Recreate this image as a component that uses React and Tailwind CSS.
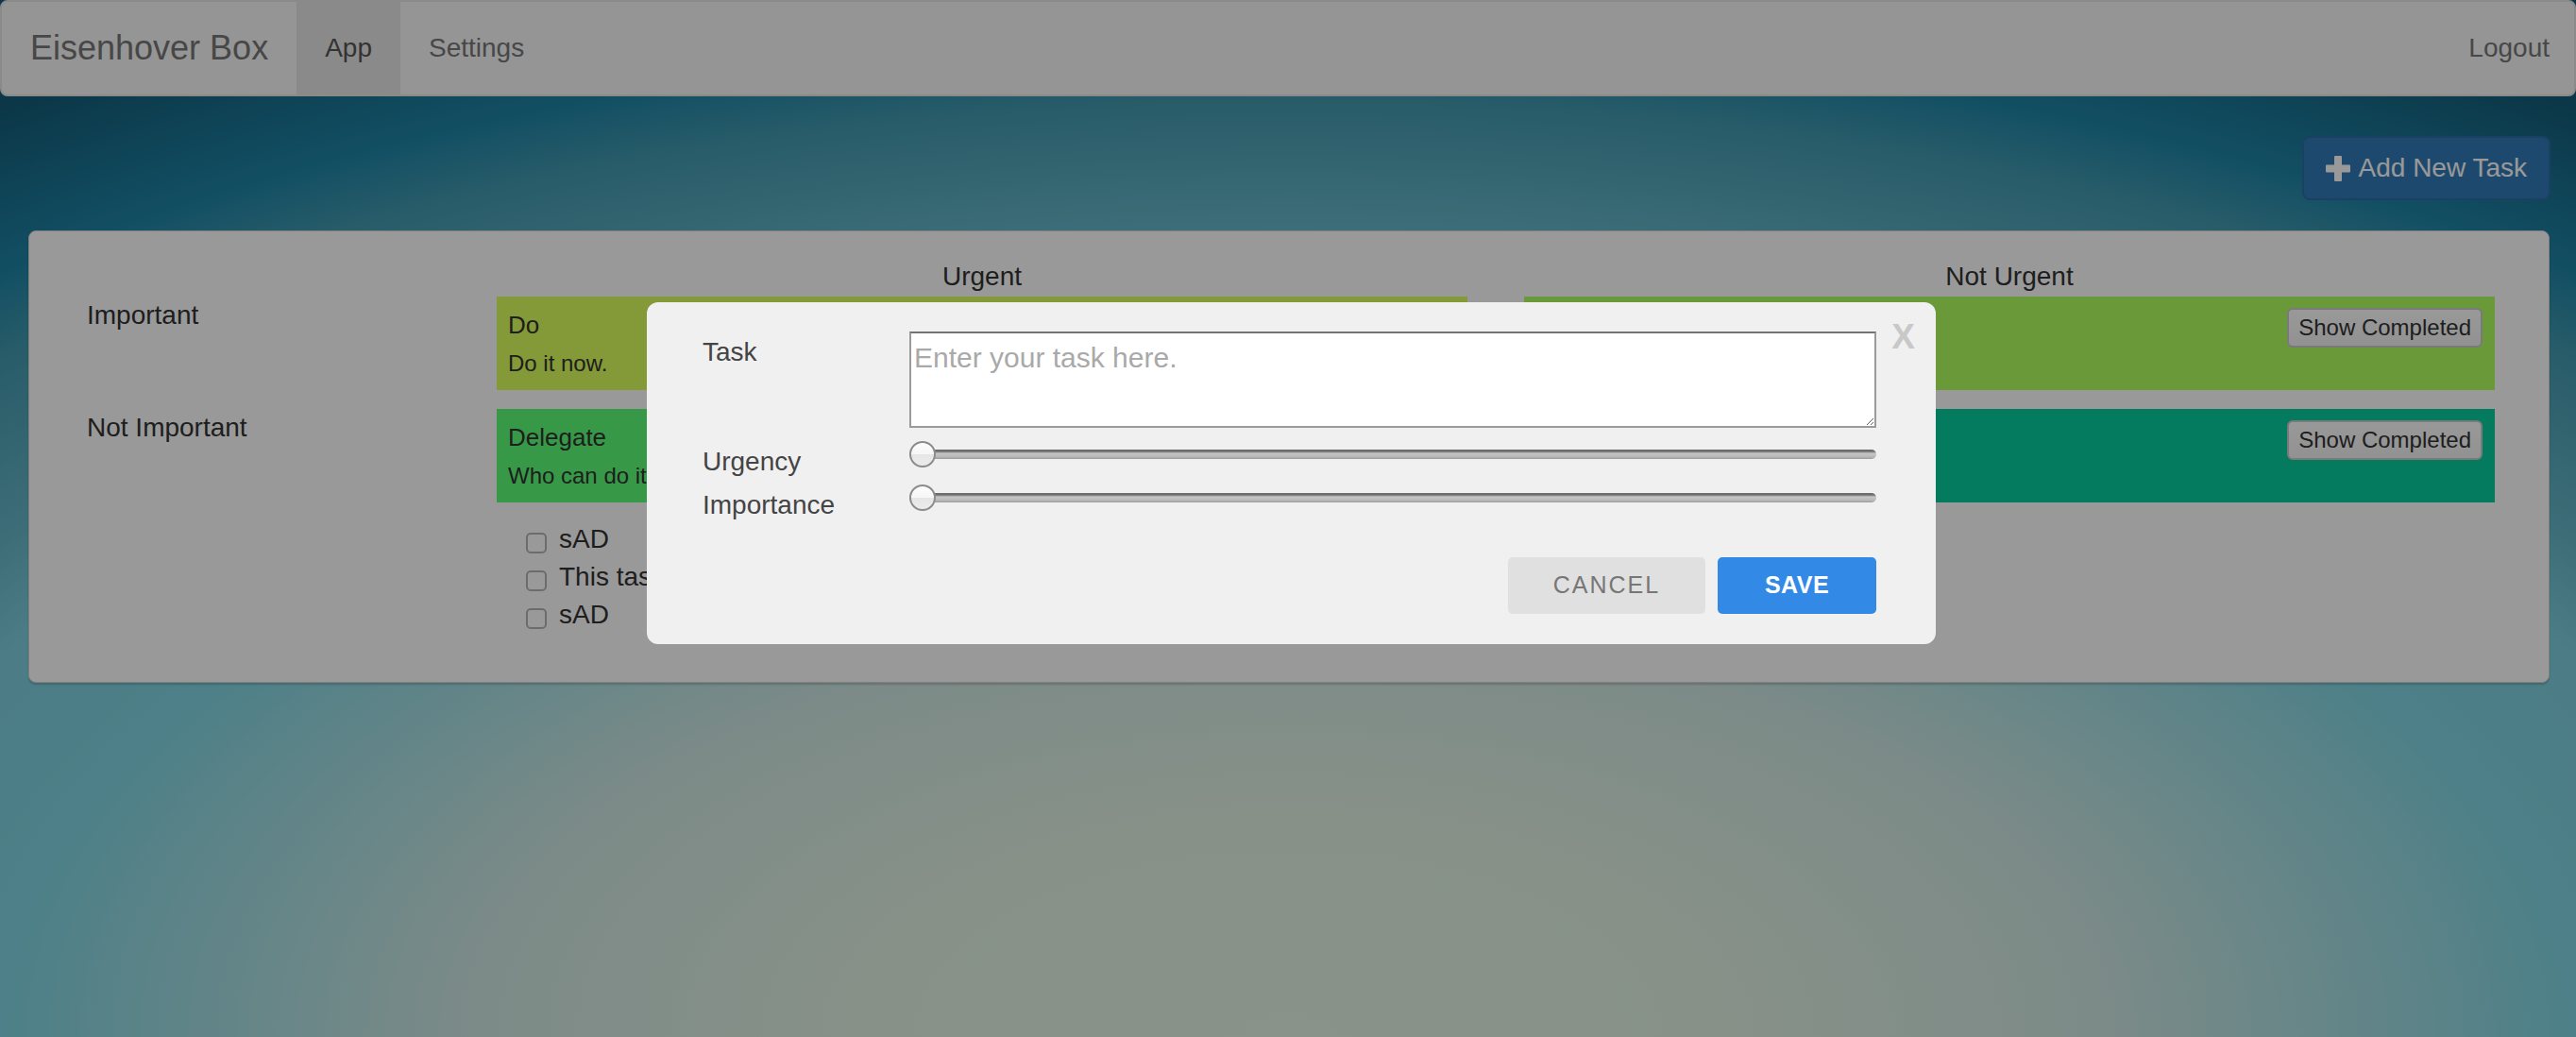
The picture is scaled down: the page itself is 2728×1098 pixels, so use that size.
import React from "react";
import * as Slider from "@radix-ui/react-slider";

function PlusIcon() {
  return (
    <svg width="26" height="27" viewBox="0 0 26 27" aria-hidden="true">
      <rect x="9" y="0" width="8" height="27" rx="1" fill="currentColor" />
      <rect x="0" y="9.5" width="26" height="8" rx="1" fill="currentColor" />
    </svg>
  );
}

function ShowCompleted() {
  return (
    <button className="h-[42px] shrink-0 rounded-[6px] border-2 border-[#cbcbcb] bg-[linear-gradient(#ffffff,#f3f3f3)] px-[10px] text-[24px] leading-[30px] text-[#333]">
      Show Completed
    </button>
  );
}

function Quadrant({ color, title, text, showButton }) {
  return (
    <div className={`flex h-[99px] items-start justify-between pl-[12px] pr-[13px] pt-[12px] ${color}`}>
      <div className="min-w-0 overflow-hidden whitespace-nowrap text-[#333]">
        <div className="text-[26px] leading-[36px]">{title}</div>
        <div className="mt-[6px] text-[24px] leading-[34px]">{text}</div>
      </div>
      {showButton && <ShowCompleted />}
    </div>
  );
}

function Task({ label }) {
  return (
    <label className="flex h-[40px] items-start gap-[13px]">
      <input
        type="checkbox"
        className="mt-[13px] h-[22px] w-[22px] shrink-0 appearance-none rounded-[5px] border-2 border-[#b5b5b5] bg-white"
      />
      <span className="text-[28px] leading-[40px] text-[#333]">{label}</span>
    </label>
  );
}

function RangeRow({ label }) {
  return (
    <div className="flex h-[46px] items-start">
      <div className="mt-[2px] w-[219px] text-[28px] leading-[40px] text-[#444]">{label}</div>
      <Slider.Root
        className="relative flex h-[28px] w-[1024px] touch-none select-none items-center"
        defaultValue={[0]}
        max={100}
        step={1}
      >
        <Slider.Track className="relative h-[10px] grow rounded-full bg-[linear-gradient(#6d6d6d_0%,#6d6d6d_20%,#c6c6c6_40%,#bababa_75%,#9c9c9c_100%)]">
          <Slider.Range className="absolute h-full" />
        </Slider.Track>
        <Slider.Thumb
          aria-label={label}
          className="block h-[28px] w-[28px] rounded-full border-2 border-[#8c8c8c] bg-[linear-gradient(#fdfdfd_0%,#f6f6f6_50%,#e6e6e6_52%,#ececec_100%)] outline-none"
        />
      </Slider.Root>
    </div>
  );
}

export default function App() {
  return (
    <div className="relative h-[1098px] min-h-screen w-full overflow-hidden bg-[radial-gradient(ellipse_2200px_1100px_at_50%_100%,#e6f5e4_0%,#e1f2e3_21%,#d0e8e3_39%,#80d5e3_62%,#7fd0df_72%,#67b7c8_78%,#449ab0_90%,#1f84a6_96%,#135c78_109%)] font-['Liberation_Sans',Arial,sans-serif] text-[#333]">
      {/* Navbar */}
      <nav className="flex h-[102px] items-stretch rounded-lg border-2 border-[#e7e7e7] bg-[#f8f8f8]">
        <a className="flex items-center px-[30px] text-[36px] leading-[40px] text-[#777]">Eisenhover Box</a>
        <a className="flex items-center bg-[#e7e7e7] px-[30px] text-[28px] leading-[40px] text-[#555]">App</a>
        <a className="flex items-center px-[30px] text-[28px] leading-[40px] text-[#777]">Settings</a>
        <a className="ml-auto flex items-center pl-[30px] pr-[26px] text-[28px] leading-[40px] text-[#777]">Logout</a>
      </nav>

      {/* Add task button */}
      <div className="mt-[42px] flex justify-end pr-[27px]">
        <button className="flex h-[68px] items-center gap-[9px] rounded-lg border-2 border-[#2e6da4] bg-[#337ab7] px-[23px] text-[28px] leading-[40px] text-white">
          <PlusIcon />
          <span>Add New Task</span>
        </button>
      </div>

      {/* Matrix panel */}
      <div className="ml-[30px] mr-[28px] mt-[32px] rounded-lg border border-[#d6d6d6] bg-white pb-[51px] pl-[61px] pr-[57px] pt-[28px] shadow-[0_2px_2px_rgba(0,0,0,0.18)]">
        <div className="grid grid-cols-[374px_1fr_1fr] gap-x-[60px]">
          <div />
          <div className="mb-[1px] text-center text-[28px] leading-[40px]">Urgent</div>
          <div className="mb-[1px] text-center text-[28px] leading-[40px]">Not Urgent</div>

          <div className="text-[28px] leading-[40px]">Important</div>
          <Quadrant color="bg-[#dcff5c]" title="Do" text="Do it now." />
          <Quadrant color="bg-[#b1ff61]" title="Decide" text="Schedule it." showButton />

          <div className="mt-[20px] text-[28px] leading-[40px]">Not Important</div>
          <div className="mt-[20px]">
            <Quadrant color="bg-[#5dff78]" title="Delegate" text="Who can do it?" />
            <div className="mt-[19px] pl-[31px]">
              <Task label="sAD" />
              <Task label="This task" />
              <Task label="sAD" />
            </div>
          </div>
          <div className="mt-[20px]">
            <Quadrant color="bg-[#08cb9e]" title="Delete" text="Drop it." showButton />
          </div>
        </div>
      </div>

      {/* Modal backdrop */}
      <div className="fixed inset-0 bg-black/40" />

      {/* Modal */}
      <div className="fixed inset-0 flex items-start justify-center pl-[7px] pt-[320px]">
        <div className="relative w-[1365px] rounded-[12px] bg-[#f0f0f0] pb-[32px] pl-[59px] pr-[63px] pt-[31px]">
          <button className="absolute right-[22px] top-[18px] text-[37px] font-bold leading-none text-[#c8c8c8]">
            X
          </button>

          <div className="flex items-start">
            <div className="mt-[2px] w-[219px] text-[28px] leading-[40px] text-[#444]">Task</div>
            <textarea
              placeholder="Enter your task here."
              className="h-[102px] w-[1024px] border-2 border-[#9a9a9a] border-t-[#747474] bg-white px-[3px] pt-[8px] text-[30px] leading-[36px] text-[#333] outline-none placeholder:text-[#a9a9a9]"
            />
          </div>

          <div className="mt-[14px]">
            <RangeRow label="Urgency" />
            <RangeRow label="Importance" />
          </div>

          <div className="mt-[31px] flex justify-end gap-[13px]">
            <button className="h-[60px] w-[209px] rounded-[5px] bg-[#e0e0e0] text-[25px] tracking-[2px] text-[#777]">
              CANCEL
            </button>
            <button className="h-[60px] w-[168px] rounded-[5px] bg-[#3289e6] text-[25px] font-bold tracking-[0.5px] text-white">
              SAVE
            </button>
          </div>
        </div>
      </div>
    </div>
  );
}
